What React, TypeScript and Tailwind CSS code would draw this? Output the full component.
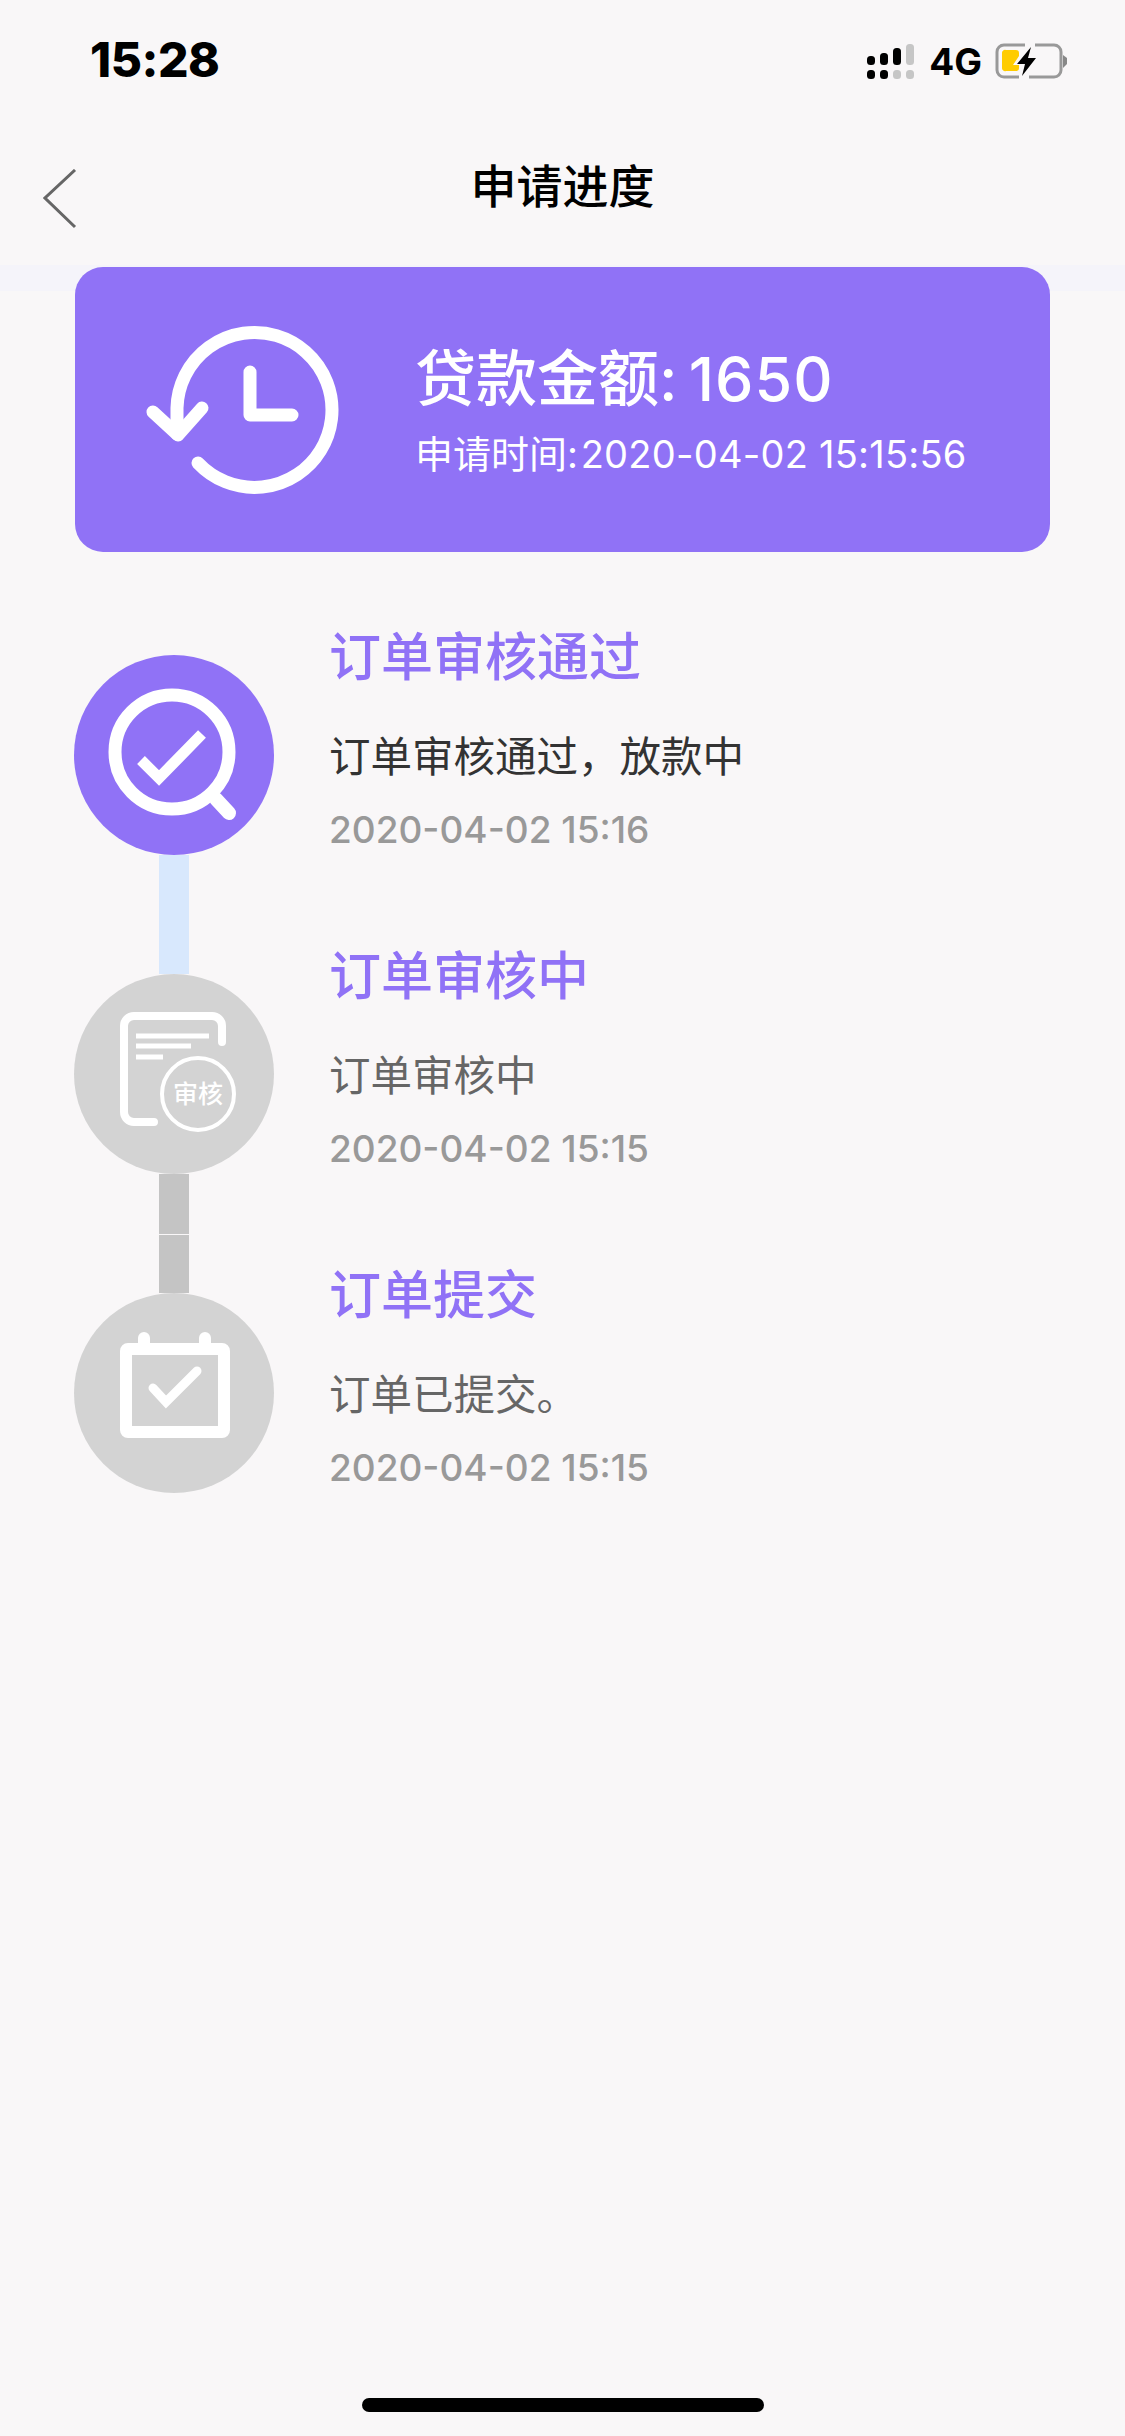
const sans = "font-['Inter','Noto_Sans_CJK_SC',sans-serif]";

function SignalIcon() {
  return (
    <svg width="47" height="35" viewBox="0 0 47 35">
      <rect x="0" y="12" width="8" height="9" rx="3.5" fill="#000" />
      <rect x="0" y="26" width="8" height="9" rx="3.5" fill="#000" />
      <rect x="13" y="9" width="8" height="12" rx="3.5" fill="#000" />
      <rect x="13" y="26" width="8" height="9" rx="3.5" fill="#000" />
      <rect x="26" y="4" width="8" height="17" rx="3.5" fill="#000" />
      <rect x="26" y="26" width="8" height="9" rx="3.5" fill="#c6c6c6" />
      <rect x="39" y="0" width="8" height="21" rx="3.5" fill="#c6c6c6" />
      <rect x="39" y="26" width="8" height="9" rx="3.5" fill="#c6c6c6" />
    </svg>
  );
}

function BatteryIcon() {
  return (
    <svg width="72" height="36" viewBox="0 0 72 36">
      <path d="M30 2 H9 a7 7 0 0 0 -7 7 V27 a7 7 0 0 0 7 7 H24 M40 2 H59 a7 7 0 0 1 7 7 V27 a7 7 0 0 1 -7 7 H34" fill="none" stroke="#999" strokeWidth="3" />
      <path d="M68 12 L72 15 V21 L68 25 Z" fill="#888" />
      <path d="M11 7 H21 a3 3 0 0 1 3 3 V13 L18 22 H24 V25 a3 3 0 0 1 -3 3 H11 a3 3 0 0 1 -4 -3 V10 a3 3 0 0 1 4 -3 Z" fill="#ffcc00" />
      <path d="M36 4 L22 21 H30 L27 33 L41 15 H33 Z" fill="#000" />
    </svg>
  );
}

function HistoryIcon() {
  return (
    <svg width="200" height="180" viewBox="0 0 200 180" fill="none" stroke="#fff" strokeWidth="13" strokeLinecap="round" strokeLinejoin="round">
      <path d="M58 143 A77.5 77.5 0 1 0 37 88 V114" />
      <path d="M13 92 L38 115 L62 88" />
      <path d="M110 52 V95 H152" />
    </svg>
  );
}

function SearchCheckIcon() {
  return (
    <svg width="200" height="200" viewBox="0 0 200 200" fill="none" stroke="#fff">
      <circle cx="98" cy="97" r="57" strokeWidth="13" />
      <path d="M67 105 L85 123 L128 79" strokeWidth="11" />
      <path d="M142 144 L155 158" strokeWidth="14" strokeLinecap="round" />
    </svg>
  );
}

function ReviewDocIcon() {
  return (
    <svg width="200" height="200" viewBox="0 0 200 200" fill="none" stroke="#fff">
      <path d="M80 148 H60 a10 10 0 0 1 -10 -10 V52 a10 10 0 0 1 10 -10 H138 a10 10 0 0 1 10 10 V68" strokeWidth="8" strokeLinecap="round" />
      <path d="M62 62 H135 M62 72 H117 M62 83 H89" strokeWidth="5" />
      <circle cx="124" cy="120" r="36" strokeWidth="4" />
      <text x="124" y="129" textAnchor="middle" fontSize="25" fontWeight="500" fill="#fff" stroke="none" fontFamily="'Noto Sans CJK SC', sans-serif">审核</text>
    </svg>
  );
}

function CalendarCheckIcon() {
  return (
    <svg width="200" height="200" viewBox="0 0 200 200" fill="none" stroke="#fff" strokeWidth="12">
      <rect x="52" y="56" width="98" height="83" rx="2" strokeLinejoin="round" />
      <path d="M70 45 V52 M131 45 V52" strokeLinecap="round" />
      <path d="M79 95 L92 109 L123 78" strokeWidth="9" strokeLinecap="round" />
    </svg>
  );
}

type Step = {
  title: string;
  desc: string;
  time: string;
  active: boolean;
  icon: React.ReactNode;
};

const steps: Step[] = [
  { title: "订单审核通过", desc: "订单审核通过，放款中", time: "2020-04-02 15:16", active: true, icon: <SearchCheckIcon /> },
  { title: "订单审核中", desc: "订单审核中", time: "2020-04-02 15:15", active: false, icon: <ReviewDocIcon /> },
  { title: "订单提交", desc: "订单已提交。", time: "2020-04-02 15:15", active: false, icon: <CalendarCheckIcon /> },
];

export default function App() {
  return (
    <div className={`${sans} flex h-[2436px] flex-col overflow-hidden bg-[#f9f7f8]`}>
      {/* status bar */}
      <div className="flex h-[120px] items-start justify-between pl-[90px] pr-[58px] pt-[40px]">
        <span className="text-[48px] leading-[40px] font-extrabold tracking-[-0.5px] text-black">15:28</span>
        <div className="flex items-center pt-[2px]">
          <SignalIcon />
          <span className="ml-[15px] pt-[2px] text-[37px] leading-[36px] font-bold text-black">4G</span>
          <div className="ml-[13px]"><BatteryIcon /></div>
        </div>
      </div>

      {/* nav */}
      <div className="relative flex h-[145px] items-center justify-center pb-[13px]">
        <svg className="absolute left-[43px] top-[49px]" width="34" height="60" viewBox="0 0 34 60" fill="none" stroke="#666" strokeWidth="3">
          <path d="M32 1 L2 29 L32 58" />
        </svg>
        <h1 className="text-[46px] leading-[60px] font-medium text-black">申请进度</h1>
      </div>

      {/* amount card sits over a thin tinted band */}
      <div className="relative">
        <div className="h-[26px] bg-[#f5f4fa]" />
        <div className="absolute left-[75px] top-[2px] flex h-[285px] w-[975px] items-center rounded-[28px] bg-[#9072f6] pl-[65px] text-white">
          <HistoryIcon />
          <div className="ml-[75px] flex flex-col">
            <span className="text-[61px] leading-[76px] font-medium">
              贷款金额<span className="tracking-[-2.5px]">: </span><span className="tracking-[1px]">1650</span>
            </span>
            <span className="mt-[13px] text-[38px] leading-[48px]">
              申请时间<span className="tracking-[-4px]">: </span><span className="tracking-[0.25px]">2020-04-02 15:15:56</span>
            </span>
          </div>
        </div>
      </div>

      {/* progress list */}
      <div className="mt-[332px] flex flex-col pl-[74px]">
        {steps.map((step, i) => (
          <div key={step.title} className="flex h-[319px] items-start">
            <div className="flex w-[200px] flex-col items-center pt-[32px]">
              <div className={`z-10 flex h-[200px] w-[200px] items-center justify-center rounded-full ${step.active ? "bg-[#9072f6]" : "bg-[#d3d3d3]"}`}>
                {step.icon}
              </div>
              {i === 0 && <div className="h-[119px] w-[30px] bg-[#d8e8fd]" />}
              {i === 1 && (
                <div className="flex h-[119px] w-[30px] flex-col">
                  <div className="h-[60px] bg-[#c4c4c4]" />
                  <div className="h-[1px] bg-[#f9f7f8]" />
                  <div className="flex-1 bg-[#c4c4c4]" />
                </div>
              )}
            </div>
            <div className="ml-[55px] flex flex-col">
              <span className="text-[52px] leading-[70px] font-medium text-[#9072f6]">{step.title}</span>
              <span className={`mt-[36px] text-[41.5px] leading-[56px] ${step.active ? "text-[#333333]" : "text-[#666666]"}`}>{step.desc}</span>
              <span className="mt-[20px] text-[37px] leading-[50px] font-medium text-[#999999]">{step.time}</span>
            </div>
          </div>
        ))}
      </div>

      {/* home indicator */}
      <div className="mt-auto flex justify-center pb-[24px]">
        <div className="h-[14px] w-[402px] rounded-full bg-black" />
      </div>
    </div>
  );
}
